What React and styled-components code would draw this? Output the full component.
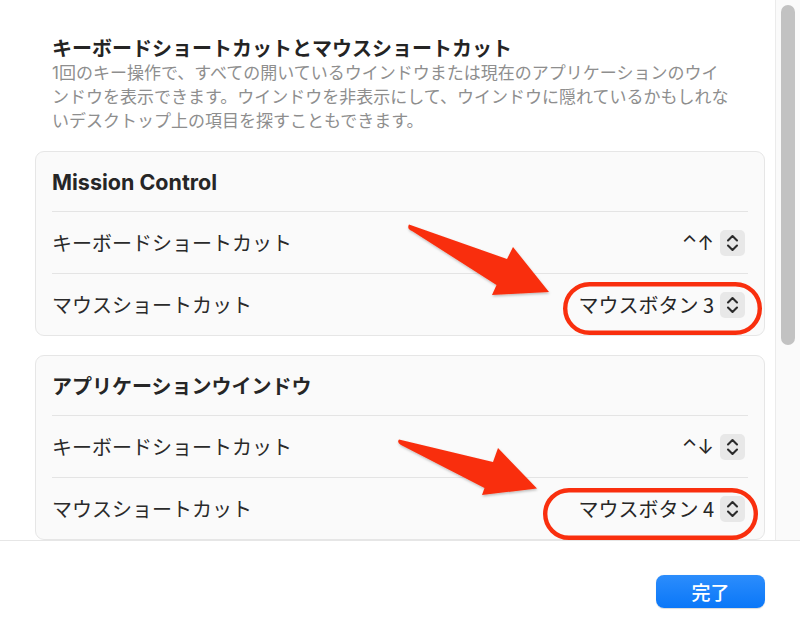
import React from 'react';
import styled, { createGlobalStyle } from 'styled-components';

const GlobalStyle = createGlobalStyle`
  html, body { margin: 0; padding: 0; background: #ffffff; }
  body { font-family: "Inter", "Noto Sans CJK JP", sans-serif; -webkit-font-smoothing: antialiased; }
`;

const Window = styled.div`
  position: relative;
  width: 800px;
  height: 643px;
  overflow: hidden;
  background: #ffffff;
  display: flex;
  flex-direction: column;
`;

const ScrollArea = styled.div`
  height: 540px;
  display: flex;
  flex-direction: row;
  overflow: hidden;
`;

const Content = styled.div`
  flex: 1;
  padding: 35px 10px 0 35px;
  display: flex;
  flex-direction: column;
`;

const Intro = styled.div`
  padding: 0 17px;
  margin-bottom: 18px;
`;

const Title = styled.div`
  font-family: "Noto Sans CJK JP", sans-serif;
  font-weight: 700;
  font-size: 20px;
  line-height: 26px;
  color: #242424;
`;

const Description = styled.div`
  font-family: "Inter", "Noto Sans CJK JP", sans-serif;
  font-size: 17px;
  line-height: 24px;
  color: #8e8e8e;
`;

const Card = styled.section`
  width: 730px;
  box-sizing: border-box;
  border: 1px solid #e6e6e6;
  border-radius: 9px;
  background: #fafafa;
  & + & { margin-top: 19px; }
`;

const CardHeader = styled.div`
  height: 59px;
  margin: 0 16px;
  display: flex;
  align-items: center;
  font-weight: 700;
  color: #262626;
  font-family: ${p => (p.$latin ? '"Inter", "Noto Sans CJK JP", sans-serif' : '"Noto Sans CJK JP", sans-serif')};
  font-size: ${p => (p.$latin ? '21.5px' : '20px')};
`;

const Row = styled.div`
  height: 61px;
  margin: 0 16px;
  border-top: 1px solid #e4e4e4;
  display: flex;
  align-items: center;
  justify-content: space-between;
`;

const Label = styled.span`
  font-family: "Noto Sans CJK JP", sans-serif;
  font-size: 20px;
  color: #2a2a2a;
`;

const Value = styled.div`
  display: flex;
  align-items: center;
  gap: 6px;
  margin-right: 3px;
`;

const ValueText = styled.span`
  font-family: ${p => (p.$symbol ? '"Inter", "DejaVu Sans", sans-serif' : '"Noto Sans CJK JP", sans-serif')};
  font-size: 20px;
  color: #262626;
  line-height: 26px;
`;

const Stepper = styled.div`
  width: 25px;
  height: 26px;
  border-radius: 5px;
  background: #e8e8e8;
  display: flex;
  align-items: center;
  justify-content: center;
`;

const ScrollTrack = styled.div`
  width: 24px;
  border-left: 1px solid #ebebeb;
  background: #fafafa;
  padding: 5px 5px 0 5px;
  box-sizing: content-box;
`;

const ScrollThumb = styled.div`
  width: 14px;
  height: 340px;
  border-radius: 7px;
  background: #c2c2c2;
`;

const Footer = styled.footer`
  flex: 1;
  border-top: 1px solid #e6e6e6;
  display: flex;
  justify-content: flex-end;
  align-items: flex-start;
  padding: 34px 35px 0 0;
`;

const DoneButton = styled.button`
  width: 109px;
  height: 33px;
  border: none;
  border-radius: 8px;
  background: linear-gradient(#2c8dfc, #0a77f8);
  color: #ffffff;
  font-family: "Noto Sans CJK JP", sans-serif;
  font-size: 19px;
  font-weight: 500;
  line-height: 33px;
  padding: 0;
  box-shadow: 0 0.5px 1px rgba(0, 0, 0, 0.15);
`;

const Overlay = styled.svg`
  position: absolute;
  left: 0;
  top: 0;
  width: 800px;
  height: 643px;
  pointer-events: none;
`;

const StepperIcon = () => (
  <svg width="25" height="26" viewBox="0 0 25 26">
    <path d="M8 10.5 L12.5 6 L17 10.5" fill="none" stroke="#2b2b2b" strokeWidth="2.1" strokeLinecap="round" strokeLinejoin="round" />
    <path d="M8 15.5 L12.5 20 L17 15.5" fill="none" stroke="#2b2b2b" strokeWidth="2.1" strokeLinecap="round" strokeLinejoin="round" />
  </svg>
);

const sections = [
  {
    title: 'Mission Control',
    latin: true,
    rows: [
      { label: 'キーボードショートカット', value: '⌃↑', symbol: true },
      { label: 'マウスショートカット', value: 'マウスボタン 3' },
    ],
  },
  {
    title: 'アプリケーションウインドウ',
    latin: false,
    rows: [
      { label: 'キーボードショートカット', value: '⌃↓', symbol: true },
      { label: 'マウスショートカット', value: 'マウスボタン 4' },
    ],
  },
];

const RED = '#f92f0e';

export default function App() {
  return (
    <>
      <GlobalStyle />
      <Window>
        <ScrollArea>
          <Content>
            <Intro>
              <Title>キーボードショートカットとマウスショートカット</Title>
              <Description>
                1回のキー操作で、すべての開いているウインドウまたは現在のアプリケーションのウイ<br />
                ンドウを表示できます。ウインドウを非表示にして、ウインドウに隠れているかもしれな<br />
                いデスクトップ上の項目を探すこともできます。
              </Description>
            </Intro>
            {sections.map(s => (
              <Card key={s.title}>
                <CardHeader $latin={s.latin}>{s.title}</CardHeader>
                {s.rows.map(r => (
                  <Row key={r.label}>
                    <Label>{r.label}</Label>
                    <Value>
                      <ValueText $symbol={r.symbol}>{r.value}</ValueText>
                      <Stepper>
                        <StepperIcon />
                      </Stepper>
                    </Value>
                  </Row>
                ))}
              </Card>
            ))}
          </Content>
          <ScrollTrack>
            <ScrollThumb />
          </ScrollTrack>
        </ScrollArea>
        <Footer>
          <DoneButton>完了</DoneButton>
        </Footer>
        <Overlay viewBox="0 0 800 643">
          <defs>
            <filter id="shadow" x="-10%" y="-10%" width="130%" height="140%">
              <feDropShadow dx="0.5" dy="1.5" stdDeviation="1.2" floodColor="#000" floodOpacity="0.25" />
            </filter>
          </defs>
          <g filter="url(#shadow)" fill={RED}>
            <path d="M409,224.5 L507,259 L513,247 L549,292 L492,295 L496.5,285 L412,231 Q406.5,229 409,224.5 Z" />
            <path d="M399,439.5 L493,462 L498,448 L537,488.5 L482,495 L484.5,488 L401,445 Q396.5,442.5 399,439.5 Z" />
          </g>
          <rect x="565.2" y="284.2" width="194.6" height="48.6" rx="24.3" fill="none" stroke={RED} strokeWidth="4.4" />
          <rect x="545.2" y="490.2" width="210.6" height="47.6" rx="23.8" fill="none" stroke={RED} strokeWidth="4.4" />
        </Overlay>
      </Window>
    </>
  );
}
